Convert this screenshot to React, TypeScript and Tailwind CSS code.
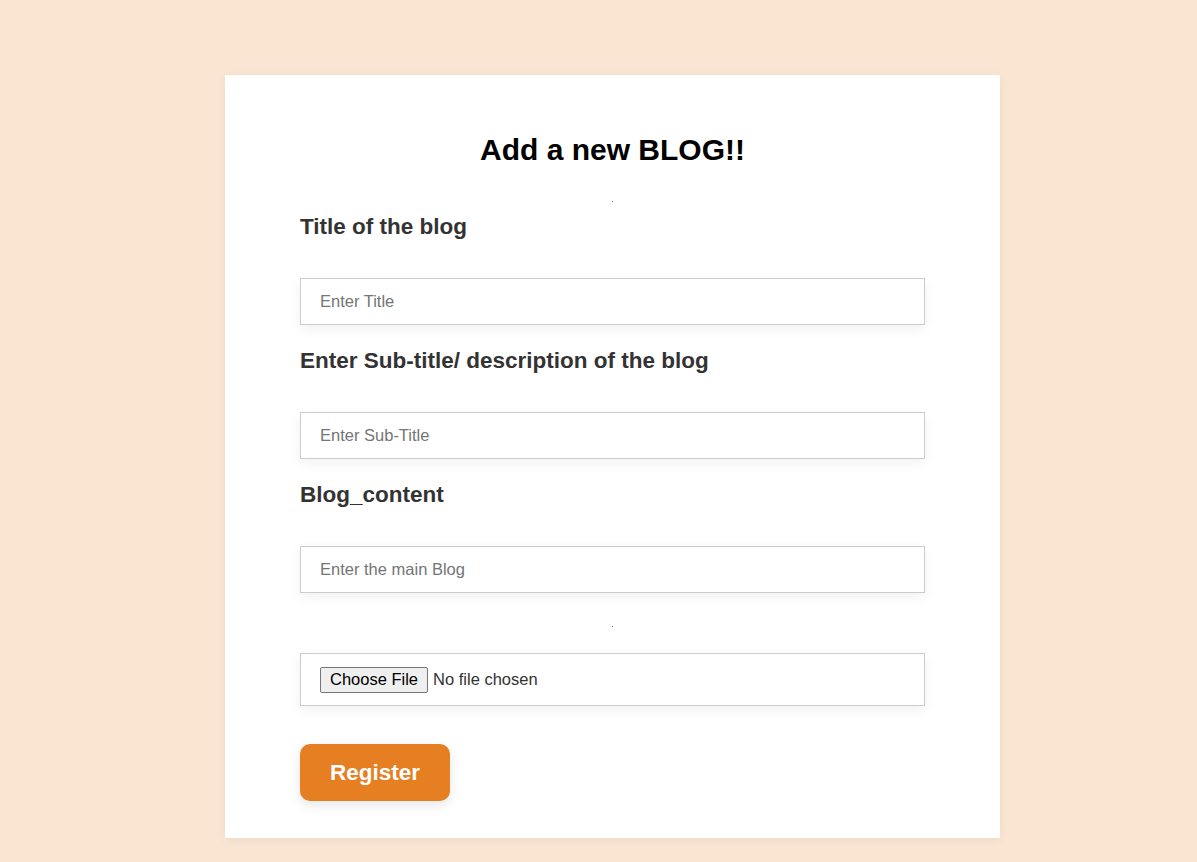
export default function App() {
    return (
        <div className="min-h-[862px] bg-[#fae5d3] pt-[75px] font-['Liberation_Sans',Arial,sans-serif]">
            <div className="ml-[225px] w-[775px] bg-white px-[75px] pb-[37px] pt-[57px] shadow-[0_2px_10px_rgba(0,0,0,0.05)]">
                <h1 className="text-center text-[30px] font-bold leading-[36px] text-black">Add a new BLOG!!</h1>

                <div className="mt-[33px] flex justify-center">
                    <div className="h-px w-px bg-gray-500" />
                </div>

                <form className="flex flex-col">
                    <label className="mt-[12px] text-[22.5px] font-bold leading-[26px] text-[#333]">Title of the blog</label>
                    <input
                        type="text"
                        placeholder="Enter Title"
                        className="mt-[38px] h-[47px] w-full border border-[#ccc] bg-white px-[19px] text-[16.5px] text-[#333] shadow-[0_4px_12px_rgba(0,0,0,0.06)] outline-none placeholder:text-[#757575]"
                    />

                    <label className="mt-[23px] text-[22.5px] font-bold leading-[26px] text-[#333]">Enter Sub-title/ description of the blog</label>
                    <input
                        type="text"
                        placeholder="Enter Sub-Title"
                        className="mt-[38px] h-[47px] w-full border border-[#ccc] bg-white px-[19px] text-[16.5px] text-[#333] shadow-[0_4px_12px_rgba(0,0,0,0.06)] outline-none placeholder:text-[#757575]"
                    />

                    <label className="mt-[23px] text-[22.5px] font-bold leading-[26px] text-[#333]">Blog_content</label>
                    <input
                        type="text"
                        placeholder="Enter the main Blog"
                        className="mt-[38px] h-[47px] w-full border border-[#ccc] bg-white px-[19px] text-[16.5px] text-[#333] shadow-[0_4px_12px_rgba(0,0,0,0.06)] outline-none placeholder:text-[#757575]"
                    />

                    <div className="mt-[33px] flex justify-center">
                        <div className="h-px w-px bg-gray-500" />
                    </div>

                    <div className="mt-[26px] flex h-[53px] w-full items-center border border-[#ccc] bg-white px-[19px] shadow-[0_4px_12px_rgba(0,0,0,0.06)]">
                        <span className="flex h-[26px] items-center rounded-[2px] border border-[#767676] bg-[#efefef] px-[9px] text-[16.5px] text-black">Choose File</span>
                        <span className="ml-[5px] text-[16.5px] text-[#333]">No file chosen</span>
                    </div>

                    <div>
                        <button
                            type="button"
                            className="mt-[38px] h-[57px] w-[150px] rounded-[10px] bg-[#e67e22] text-[22.5px] font-bold text-white shadow-[0_4px_12px_rgba(0,0,0,0.1)]"
                        >
                            Register
                        </button>
                    </div>
                </form>
            </div>
        </div>
    );
}
